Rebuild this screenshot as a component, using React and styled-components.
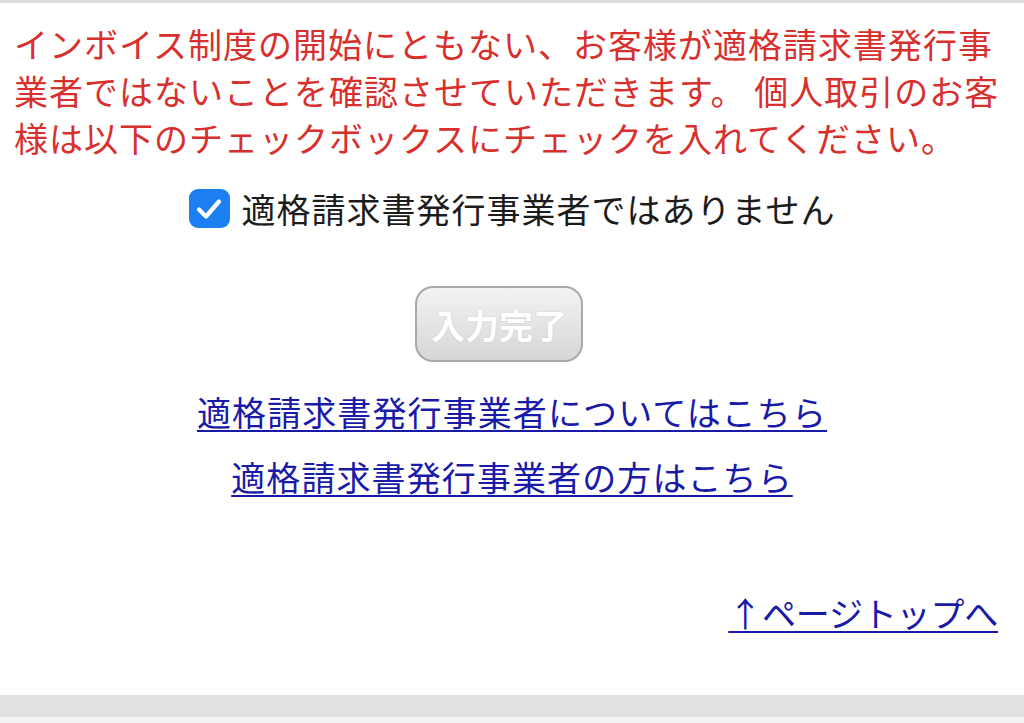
import React, { useState } from "react";
import styled, { createGlobalStyle } from "styled-components";

const GlobalStyle = createGlobalStyle`
  html, body {
    margin: 0;
    padding: 0;
    background: #ffffff;
  }
  body {
    font-family: "Noto Sans CJK JP", "Noto Sans", sans-serif;
  }
`;

const Page = styled.div`
  width: 1024px;
  min-height: 723px;
  display: flex;
  flex-direction: column;
  overflow: hidden;
`;

const TopRule = styled.div`
  height: 3px;
  background: #dedede;
`;

const Notice = styled.p`
  margin: 17px 0 0;
  padding: 0 14px;
  font-size: 34px;
  line-height: 47px;
  color: #d8302c;
  letter-spacing: 1px;
  white-space: nowrap;
`;

const CheckRow = styled.label`
  margin-top: 24px;
  display: flex;
  justify-content: center;
  align-items: center;
  gap: 12px;
  height: 47px;
  font-size: 34px;
  letter-spacing: 1px;
  color: #1c1c1c;
  cursor: pointer;
`;

const Box = styled.span`
  width: 41px;
  height: 39px;
  border-radius: 9px;
  background: ${(p) => (p.checked ? "#1b7ff2" : "#ffffff")};
  border: ${(p) => (p.checked ? "none" : "2px solid #999")};
  display: flex;
  align-items: center;
  justify-content: center;
  box-sizing: border-box;
`;

const HiddenInput = styled.input`
  display: none;
`;

const SubmitButton = styled.button`
  align-self: center;
  margin: 54px 26px 0 0;
  width: 168px;
  height: 76px;
  border: 2px solid #a9a9a9;
  border-radius: 18px;
  background: linear-gradient(#f3f3f3, #d6d6d6);
  color: #ffffff;
  font-family: "Noto Sans CJK JP", sans-serif;
  font-weight: 700;
  font-size: 34px;
  text-shadow: 0 0 2px rgba(0, 0, 0, 0.12);
  box-sizing: border-box;
  padding: 0;
`;

const Links = styled.div`
  margin-top: 26px;
  display: flex;
  flex-direction: column;
  align-items: center;
  gap: 18px;
`;

const TextLink = styled.a`
  font-size: 34px;
  line-height: 47px;
  color: #1a1aa8;
  text-decoration: underline;
  text-decoration-thickness: 2px;
  text-underline-offset: 4px;
  letter-spacing: ${(p) => p.$spacing || "1.1px"};
`;

const PageTopRow = styled.div`
  margin-top: 89px;
  display: flex;
  justify-content: flex-end;
  padding-right: 26px;
`;

const FooterBand = styled.div`
  margin-top: 59px;
  height: 22px;
  background: #e1e1e1;
`;

const FooterRest = styled.div`
  flex: 1;
  background: #f3f3f3;
`;

const CheckIcon = () => (
  <svg width="26" height="22" viewBox="0 0 26 22">
    <path
      d="M3 11.5 L10 18.5 L23 3.5"
      fill="none"
      stroke="#ffffff"
      strokeWidth="4.2"
      strokeLinecap="round"
      strokeLinejoin="round"
    />
  </svg>
);

const App = () => {
  const [checked, setChecked] = useState(true);

  return (
    <>
      <GlobalStyle />
      <Page>
        <TopRule />
        <Notice>
          インボイス制度の開始にともない、お客様が適格請求書発行事
          <br />
          業者ではないことを確認させていただきます。 個人取引のお客
          <br />
          様は以下のチェックボックスにチェックを入れてください。
        </Notice>

        <CheckRow>
          <HiddenInput
            type="checkbox"
            checked={checked}
            onChange={() => setChecked(!checked)}
          />
          <Box checked={checked}>{checked && <CheckIcon />}</Box>
          適格請求書発行事業者ではありません
        </CheckRow>

        <SubmitButton type="button">入力完了</SubmitButton>

        <Links>
          <TextLink href="#">適格請求書発行事業者についてはこちら</TextLink>
          <TextLink href="#">適格請求書発行事業者の方はこちら</TextLink>
        </Links>

        <PageTopRow>
          <TextLink href="#" $spacing="-0.2px">↑ページトップへ</TextLink>
        </PageTopRow>

        <FooterBand />
        <FooterRest />
      </Page>
    </>
  );
};

export default App;
